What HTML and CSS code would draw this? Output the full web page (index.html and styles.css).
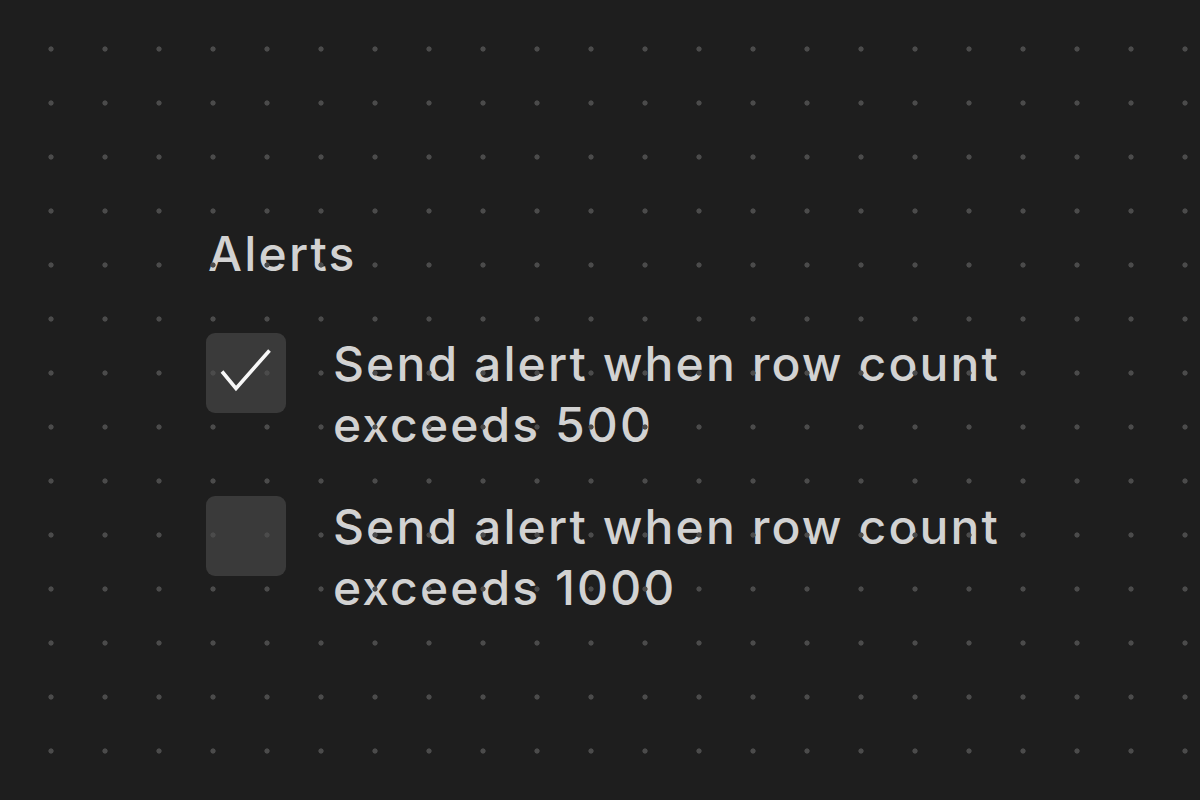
FILE: index.html
```html
<!DOCTYPE html>
<html lang="en">
<head>
<meta charset="utf-8">
<title>Alerts</title>
<link rel="stylesheet" href="styles.css">
</head>
<body>
<main class="panel">
  <h1 class="title">Alerts</h1>
  <ul class="options">
    <li class="option">
      <span class="box checked">
        <svg class="check" viewBox="0 0 80 80" width="80" height="80" aria-hidden="true">
          <path d="M16 38.5 L30 55.5 L63.5 17.5" fill="none" stroke="#f7f7f7" stroke-width="3.6" stroke-linecap="butt" stroke-linejoin="miter"/>
        </svg>
      </span>
      <span class="label">Send alert when row count exceeds 500</span>
    </li>
    <li class="option">
      <span class="box"></span>
      <span class="label">Send alert when row count exceeds 1000</span>
    </li>
  </ul>
</main>
<div class="dots" aria-hidden="true"></div>
</body>
</html>
```

FILE: styles.css
```css
html, body {
  margin: 0;
  padding: 0;
  width: 1200px;
  height: 800px;
  overflow: hidden;
}

body {
  background: #1e1e1e;
  font-family: Inter, "Noto Sans", "Liberation Sans", sans-serif;
  color: #d2d2d2;
}

.panel {
  display: flex;
  flex-direction: column;
  padding: 223px 0 0 206px;
}

.title {
  margin: 0;
  padding-left: 2px;
  font-size: 48px;
  font-weight: 500;
  line-height: 61px;
  letter-spacing: 2.2px;
}

.options {
  list-style: none;
  margin: 49px 0 0;
  padding: 0;
  display: flex;
  flex-direction: column;
  gap: 41px;
}

.option {
  display: flex;
  align-items: flex-start;
  gap: 47px;
}

.box {
  flex: none;
  width: 80px;
  height: 80px;
  border-radius: 9px;
  background: #3a3a3a;
  display: block;
}

.check {
  display: block;
}

.label {
  width: 720px;
  font-size: 48px;
  font-weight: 500;
  line-height: 61px;
  letter-spacing: 2.1px;
}

.dots {
  position: fixed;
  inset: 0;
  pointer-events: none;
  background-image: radial-gradient(circle at center, #4b4b4b 0, #4b4b4b 2.2px, rgba(75,75,75,0) 3px);
  background-size: 54px 54px;
  background-position: 24px 22px;
}
```
